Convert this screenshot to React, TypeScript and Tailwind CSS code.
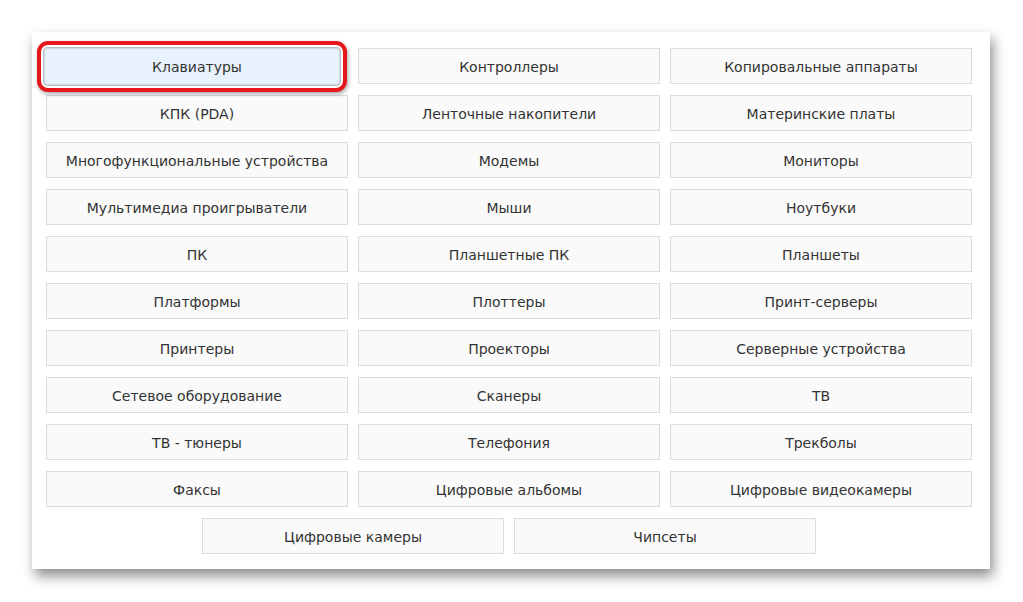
import React from "react";

const items = [
  "Клавиатуры",
  "Контроллеры",
  "Копировальные аппараты",
  "КПК (PDA)",
  "Ленточные накопители",
  "Материнские платы",
  "Многофункциональные устройства",
  "Модемы",
  "Мониторы",
  "Мультимедиа проигрыватели",
  "Мыши",
  "Ноутбуки",
  "ПК",
  "Планшетные ПК",
  "Планшеты",
  "Платформы",
  "Плоттеры",
  "Принт-серверы",
  "Принтеры",
  "Проекторы",
  "Серверные устройства",
  "Сетевое оборудование",
  "Сканеры",
  "ТВ",
  "ТВ - тюнеры",
  "Телефония",
  "Трекболы",
  "Факсы",
  "Цифровые альбомы",
  "Цифровые видеокамеры",
];

const last = ["Цифровые камеры", "Чипсеты"];

function Btn({ label }: { label: string }) {
  return (
    <div className="h-[36px] w-[302px] flex items-center justify-center pt-[2px] border border-[#dcdcdc] bg-[#fafafa] text-[14px] text-[#333333]">
      {label}
    </div>
  );
}

export default function App() {
  return (
    <div
      className="w-[1023px] h-[602px] bg-white pt-[32px] pl-[32px]"
      style={{ fontFamily: '"DejaVu Sans", sans-serif' }}
    >
      <div className="w-[958px] h-[537px] bg-white pt-[16px] pl-[14px] shadow-[3px_7px_12px_rgba(0,0,0,0.45)]">
        <div className="grid grid-cols-[302px_302px_302px] gap-x-[10px] gap-y-[11px]">
          {items.map((it, i) =>
            i === 0 ? (
              <div key={it} className="relative h-[36px]">
                <div className="absolute left-[-9px] top-[-7px] w-[310px] h-[51px] rounded-[11px] border-[4px] border-[#e5161c] bg-white p-[2px] shadow-[1px_2px_4px_rgba(0,0,0,0.35)]">
                  <div className="w-full h-full rounded-[4px] bg-[#e8f2fc] border border-[#b9bcc0] shadow-[inset_0_0_2px_rgba(0,0,0,0.35)] flex items-center justify-center pt-[2px] text-[14px] text-[#333333] pl-[10px]">
                    {it}
                  </div>
                </div>
              </div>
            ) : (
              <Btn key={it} label={it} />
            )
          )}
        </div>
        <div className="flex justify-center gap-x-[10px] mt-[11px] w-[926px]">
          {last.map((it) => (
            <Btn key={it} label={it} />
          ))}
        </div>
      </div>
    </div>
  );
}
